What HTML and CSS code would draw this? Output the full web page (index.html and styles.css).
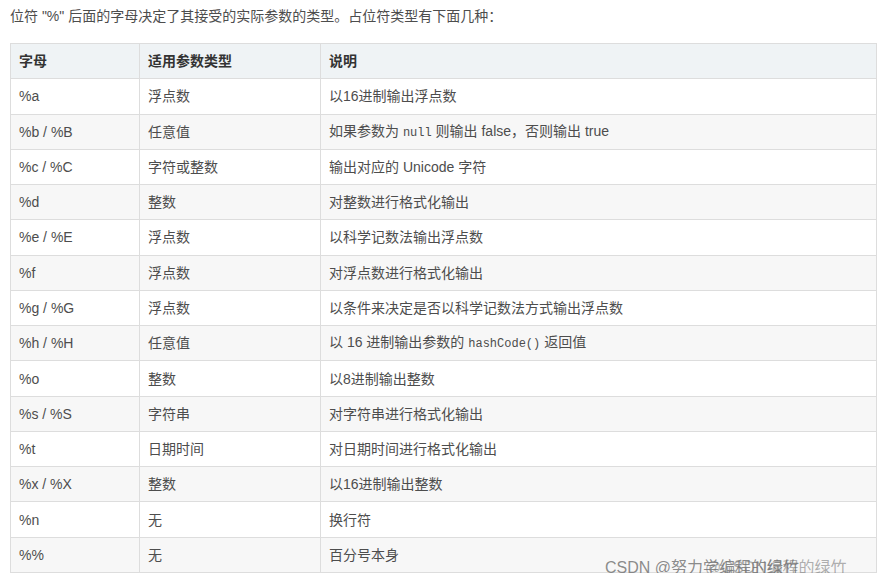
FILE: index.html
```html
<!DOCTYPE html>
<html lang="zh-CN">
<head>
<meta charset="utf-8">
<link rel="stylesheet" href="styles.css">
</head>
<body>
<div class="page">
  <p class="intro">位符 "%" 后面的字母决定了其接受的实际参数的类型。占位符类型有下面几种：</p>
  <table class="fmt">
    <colgroup><col class="c1"><col class="c2"><col class="c3"></colgroup>
    <thead>
      <tr><th>字母</th><th>适用参数类型</th><th>说明</th></tr>
    </thead>
    <tbody>
      <tr><td>%a</td><td>浮点数</td><td>以16进制输出浮点数</td></tr>
      <tr><td>%b / %B</td><td>任意值</td><td>如果参数为 <code>null</code> 则输出 false，否则输出 true</td></tr>
      <tr><td>%c / %C</td><td>字符或整数</td><td>输出对应的 Unicode 字符</td></tr>
      <tr><td>%d</td><td>整数</td><td>对整数进行格式化输出</td></tr>
      <tr><td>%e / %E</td><td>浮点数</td><td>以科学记数法输出浮点数</td></tr>
      <tr><td>%f</td><td>浮点数</td><td>对浮点数进行格式化输出</td></tr>
      <tr><td>%g / %G</td><td>浮点数</td><td>以条件来决定是否以科学记数法方式输出浮点数</td></tr>
      <tr><td>%h / %H</td><td>任意值</td><td>以 16 进制输出参数的 <code>hashCode()</code> 返回值</td></tr>
      <tr><td>%o</td><td>整数</td><td>以8进制输出整数</td></tr>
      <tr><td>%s / %S</td><td>字符串</td><td>对字符串进行格式化输出</td></tr>
      <tr><td>%t</td><td>日期时间</td><td>对日期时间进行格式化输出</td></tr>
      <tr><td>%x / %X</td><td>整数</td><td>以16进制输出整数</td></tr>
      <tr><td>%n</td><td>无</td><td>换行符</td></tr>
      <tr><td>%%</td><td>无</td><td>百分号本身</td></tr>
    </tbody>
  </table>
  <div class="watermark"><span class="wm1">CSDN @努力学编程的绿竹</span><span class="wm2">@CSDN编程的绿竹</span></div>
</div>
</body>
</html>
```

FILE: styles.css
```css
html, body {
  margin: 0;
  padding: 0;
  background: #fff;
}
.page {
  position: relative;
  padding: 0 5px 0 10px;
  font-family: "Liberation Sans", "Noto Sans CJK SC", sans-serif;
  font-size: 14px;
  color: #4d4d4d;
}
.intro {
  margin: 5px 0 16px 0;
  line-height: 22px;
}
.fmt {
  border-collapse: collapse;
  width: 866px;
  table-layout: fixed;
}
.c1 { width: 129px; }
.c2 { width: 181px; }
.c3 { width: 556px; }
.fmt th, .fmt td {
  border: 1px solid #dddddd;
  padding: 6px 8px;
  height: 22.27px;
  line-height: 18px;
  text-align: left;
  vertical-align: middle;
  white-space: nowrap;
}
.fmt th {
  background: #eff3f5;
  color: #333;
  font-weight: bold;
}
.fmt tbody tr:nth-child(even) td {
  background: #f7f7f7;
}
.fmt code {
  font-family: "Liberation Mono", monospace;
  font-size: 12px;
  color: #4d4d4d;
}
.watermark {
  position: absolute;
  left: 605px;
  top: 552px;
  font-size: 16px;
  line-height: 22px;
  white-space: nowrap;
}
.wm1 {
  color: rgba(110, 110, 110, 0.8);
}
.wm2 {
  position: absolute;
  left: 100px;
  top: 0;
  color: rgba(110, 110, 110, 0.55);
}
```
